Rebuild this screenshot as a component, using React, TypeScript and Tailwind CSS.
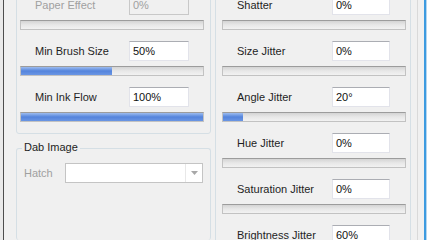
import React from "react";

type Row = { label: string; value: string; fill: number; disabled?: boolean };

const leftRows: Row[] = [
  { label: "Paper Effect", value: "0%", fill: 0, disabled: true },
  { label: "Min Brush Size", value: "50%", fill: 0.5 },
  { label: "Min Ink Flow", value: "100%", fill: 1 },
];

const rightRows: Row[] = [
  { label: "Shatter", value: "0%", fill: 0 },
  { label: "Size Jitter", value: "0%", fill: 0 },
  { label: "Angle Jitter", value: "20°", fill: 0.11 },
  { label: "Hue Jitter", value: "0%", fill: 0 },
  { label: "Saturation Jitter", value: "0%", fill: 0 },
  { label: "Brightness Jitter", value: "60%", fill: 0.6 },
];

const Slider = ({ fill }: { fill: number }) => (
  <div className="relative h-[10px] w-full border border-[#c2c2c2] border-t-[#9c9c9c] bg-gradient-to-b from-[#d4d4d4] via-[#e8e8e8] to-[#f2f2f2]">
    {fill > 0 && (
      <div
        className="h-full bg-gradient-to-b from-[#9dbcef] via-[#5484dc] to-[#6a96e4]"
        style={{ width: `${fill * 100}%` }}
      />
    )}
  </div>
);

const SliderRow = ({ row, labelW, inputW }: { row: Row; labelW: string; inputW: string }) => (
  <div className="flex flex-col">
    <div className="flex h-[20px] items-center">
      <span className={`${labelW} pl-[15px] ${row.disabled ? "text-[#a0a0a0]" : "text-[#1e1e1e]"}`}>{row.label}</span>
      <div
        className={`${inputW} h-[20px] flex items-center px-[3px] border ${
          row.disabled
            ? "border-[#c8c8c8] bg-[#f0f0f0] text-[#a0a0a0]"
            : "border-[#e2e3ea] border-t-[#abadb3] bg-white text-[#111]"
        }`}
      >
        {row.value}
      </div>
    </div>
    <div className="mt-[5px]">
      <Slider fill={row.fill} />
    </div>
  </div>
);

export default function App() {
  return (
    <div className="flex h-[240px] w-[427px] overflow-hidden bg-[#f0f0f0] font-['Liberation_Sans',sans-serif] text-[11px] leading-none">
      <div className="w-[3px] bg-[#e9e9e9]" />
      <div className="w-px bg-[#4d4d4d]" />
      <div className="w-[12px]" />

      {/* left column */}
      <div className="flex w-[195px] flex-col">
        <div className="-mt-[19px] flex flex-col gap-[11px] rounded-[3px] border border-[#d5dfe5] pb-[11px] pl-[3px] pr-[6px] pt-[13px]">
          {leftRows.map((r) => (
            <SliderRow key={r.label} row={r} labelW="w-[109px]" inputW="w-[60px]" />
          ))}
        </div>

        <div className="relative mt-[14px] flex-1 rounded-[3px] border border-[#d5dfe5] border-b-0 px-[7px] pt-[14px]">
          <span className="absolute -top-[7px] left-[5px] bg-[#f0f0f0] px-[2px] text-[#1e1e1e]">Dab Image</span>
          <div className="flex h-[20px] items-center">
            <span className="w-[41px] text-[#a0a0a0]">Hatch</span>
            <div className="flex h-[20px] flex-1 items-center border border-[#c4c4c4] bg-white">
              <div className="flex-1" />
              <div className="flex h-full w-[17px] items-center justify-center border-l border-[#e8e8e8]">
                <svg width="7" height="4" viewBox="0 0 7 4">
                  <path d="M0 0h7L3.5 4z" fill="#a8a8a8" />
                </svg>
              </div>
            </div>
          </div>
        </div>
      </div>

      <div className="w-[4px]" />

      {/* right column */}
      <div className="flex w-[196px] flex-col">
        <div className="-mt-[19px] flex flex-col gap-[11px] rounded-[3px] border border-[#d5dfe5] border-b-0 pl-[6px] pr-[4px] pt-[13px]">
          {rightRows.map((r) => (
            <SliderRow key={r.label} row={r} labelW="w-[110px]" inputW="w-[58px]" />
          ))}
        </div>
      </div>

      <div className="w-[6px]" />
      <div className="w-px bg-[#d9d9d9]" />
      <div className="w-[6px] bg-[#f0f0f0]" />
      <div className="w-[2px] bg-[#3d9be0]" />
      <div className="w-px bg-[#b5d6f0]" />
    </div>
  );
}
